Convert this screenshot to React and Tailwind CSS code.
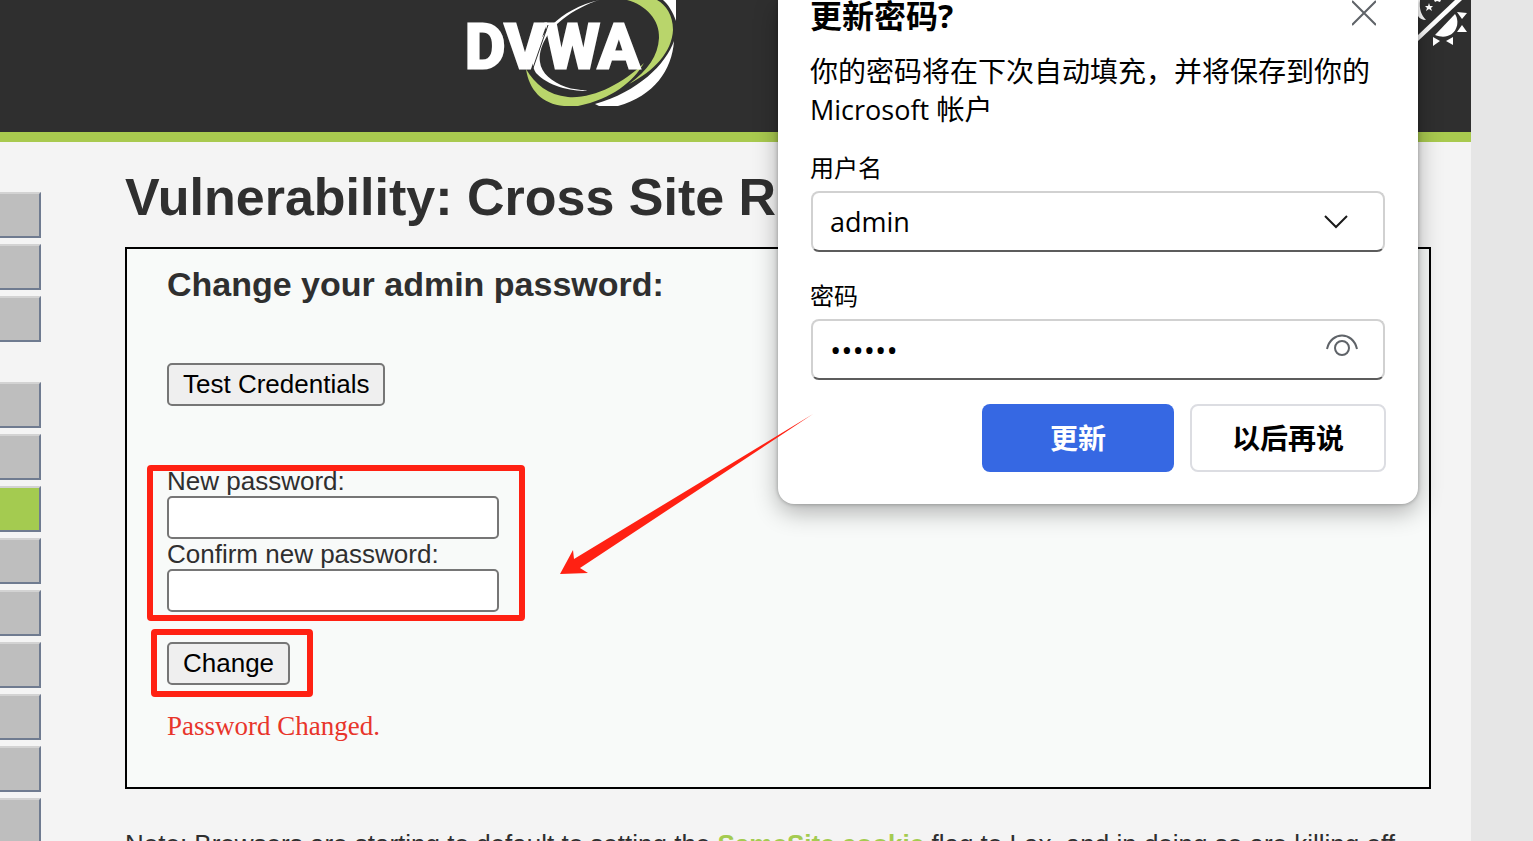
import React, { useState } from "react";

const menuGroups = [
  ["Home", "Instructions", "Setup / Reset DB"],
  [
    "Brute Force",
    "Command Injection",
    "CSRF",
    "File Inclusion",
    "File Upload",
    "Insecure CAPTCHA",
    "SQL Injection",
    "SQL Injection (Blind)",
    "Weak Session IDs",
  ],
];

function Logo() {
  return (
    <svg width="212" height="106" viewBox="0 0 212 106" role="img" aria-label="DVWA">
      {/* rings behind the letters */}
      <path d="M134 0 C114 4 97 14 86 25 C70 42 62 60 70 73 C82 86 104 91 121 91 C121 90 108 90 100 87 C86 82 75 73 74 62 C72 48 82 30 97 19 C107 11 122 3 134 0Z" fill="#fff" />
      <path d="M161 0 C180 5 194 20 193 38 C192 56 182 70 163 84 C188 71 206 52 207 30 C207 15 200 5 191 0Z" fill="#b9d56b" />
      <path d="M60 69 C63 90 76 104 98 106 L112 106 C146 99 167 82 178 63 C156 84 127 99 102 97 C82 95 69 84 60 69Z" fill="#b9d56b" />
      <path d="M197 0 C202 4 207 12 210 21 L210 0Z" fill="#fff" />
      <path d="M208 41 C200 64 172 92 129 104 L133 106 L152 106 C188 96 206 70 208 41Z" fill="#fff" />
      <text
        x="-1"
        y="68"
        fill="#fff"
        stroke="#fff"
        strokeWidth="3"
        className="font-['Roboto',sans-serif] text-[62px] font-bold"
      >
        DVWA
      </text>
      <path d="M67 68 L82 25" stroke="#2f2f2f" strokeWidth="1" />
    </svg>
  );
}

function ThemeIcon() {
  return (
    <svg width="64" height="46" viewBox="0 0 64 46" fill="#fff" aria-hidden="true">
      <path d="M11 0 H13 C12 9 14 15 19 20 C15 20 12 18 11 16Z" />
      <path d="M22 3 l1 3 3 0 -2 2 1 3 -3 -2 -3 2 1 -3 -2 -2 3 0Z" />
      <path d="M27 0 h7 l-1 2 -3 -1 -2 1Z" />
      <path d="M48 0 H55 L11 41 V35Z" />
      <path d="M48 14 C55 25 46 42 28 35Z" />
      <path d="M50 12 L60 13 L55 19Z M55 25 L60 32 L50 32Z M26 37 L33 41 L26 46Z M46 37 L46 45 L39 41Z" />
    </svg>
  );
}

function SideMenu() {
  return (
    <nav className="flex w-[41px] shrink-0 flex-col gap-10 pt-[50px]">
      {menuGroups.map((group, i) => (
        <ul key={i} className="flex flex-col gap-1.5">
          {group.map((name) => (
            <li key={name}>
              <a
                href="#"
                aria-label={name}
                className={`block h-[46px] border-y-2 border-r-2 border-t-[#d3d3d3] border-r-[#6f7b90] border-b-[#6f7b90] ${
                  name === "CSRF" ? "bg-[#a4cb50]" : "bg-[#bebebe]"
                }`}
              />
            </li>
          ))}
        </ul>
      ))}
    </nav>
  );
}

function PasswordForm() {
  const inputClass = "block h-[43px] w-[332px] rounded-[5px] border-2 border-[#767676] bg-white px-2";
  const buttonClass = "h-[43px] rounded-[5px] border-2 border-[#767676] bg-[#efefef] px-3.5 pb-0.5 leading-[30px] text-black";

  return (
    <form
      onSubmit={(e) => e.preventDefault()}
      className="mt-5 flex flex-col items-start border-2 border-black bg-[#f8faf9] px-10 pt-[15px] pb-[46px]"
    >
      <h3 className="text-[34px] leading-10 font-bold">Change your admin password:</h3>
      <button type="button" className={`mt-[59px] ${buttonClass}`}>
        Test Credentials
      </button>

      <div className="relative mt-[60px]">
        <label htmlFor="new" className="block">New password:</label>
        <input id="new" type="password" className={inputClass} />
        <label htmlFor="confirm" className="block">Confirm new password:</label>
        <input id="confirm" type="password" className={inputClass} />
        <div className="pointer-events-none absolute -top-px -right-[26px] -bottom-[9px] -left-5 rounded border-6 border-[#ff2113]" />
      </div>

      <div className="relative mt-[30px]">
        <button type="submit" className={`block ${buttonClass}`}>Change</button>
        <div className="pointer-events-none absolute -top-[13px] -right-[23px] -bottom-3 -left-4 rounded border-6 border-[#ff2113]" />
      </div>

      <p className="mt-[26px] font-['Liberation_Serif',serif] text-[27px] text-[#e8352b]">Password Changed.</p>
    </form>
  );
}

function SavePasswordDialog() {
  const [user, setUser] = useState("admin");
  const [password, setPassword] = useState("123456");
  const fieldClass = "h-[61px] w-full rounded-lg border-2 border-[#d1d1d1] border-b-[#5c5c5c] bg-white px-[17px]";

  return (
    <section
      aria-label="更新密码"
      className="absolute top-0 right-[115px] w-[640px] rounded-b-2xl bg-white px-8 pb-8 font-['Open_Sans','Noto_Sans_CJK_SC',sans-serif] text-[28px] leading-[38px] text-black shadow-[0_8px_24px_rgba(0,0,0,0.3),0_0_4px_rgba(0,0,0,0.3)]"
    >
      <div className="flex items-start justify-between">
        <h2 className="text-[32px] leading-8 font-bold">更新密码?</h2>
        <button type="button" aria-label="关闭" className="mr-2.5">
          <svg width="24" height="26" viewBox="0 0 24 26" stroke="#5f6368" strokeWidth="2" aria-hidden="true">
            <path d="M0 1 L24 25 M24 1 L0 25" />
          </svg>
        </button>
      </div>
      <p className="mt-5">
        你的密码将在下次自动填充，并将保存到你的
        <br />
        <span className="text-[27px]">Microsoft</span> 帐户
      </p>

      <label htmlFor="user" className="mt-6 block text-2xl leading-[30px]">用户名</label>
      <div className="relative mx-px mt-2 flex items-center">
        <select
          id="user"
          value={user}
          onChange={(e) => setUser(e.target.value)}
          className={`appearance-none text-[27px] ${fieldClass}`}
        >
          <option>admin</option>
        </select>
        <svg className="pointer-events-none absolute right-[37px]" width="24" height="14" viewBox="0 0 24 14" fill="none" stroke="#1a1a1a" strokeWidth="2" aria-hidden="true">
          <path d="M1 1 L12 12 L23 1" />
        </svg>
      </div>

      <label htmlFor="saved" className="mt-[29px] block text-2xl leading-[30px]">密码</label>
      <div className="relative mx-px mt-2">
        <input
          id="saved"
          type="password"
          value={password}
          onChange={(e) => setPassword(e.target.value)}
          className={`block text-[30px] ${fieldClass}`}
        />
        <button type="button" aria-label="显示密码" className="absolute top-[15px] right-[27px]">
          <svg width="32" height="22" viewBox="0 0 32 22" fill="none" stroke="#5f6368" strokeWidth="2" aria-hidden="true">
            <path d="M1 15 C5 -3 27 -3 31 15" />
            <circle cx="16" cy="14" r="7" />
          </svg>
        </button>
      </div>

      <div className="mt-6 flex justify-end gap-4 font-bold">
        <button type="button" className="h-[68px] w-48 rounded-lg bg-[#3668e3] text-white">更新</button>
        <button type="button" className="h-[68px] w-[196px] rounded-lg border-2 border-[#dcdde2] bg-white">以后再说</button>
      </div>
    </section>
  );
}

export default function App() {
  return (
    <div className="relative h-screen overflow-hidden bg-[#e6e6e6] pr-[62px] font-['Liberation_Sans',Arial,sans-serif] text-[26px] leading-[30px] text-[#2f2f2f]">
      <div className="min-h-full bg-[#f4f4f4]">
        <header className="flex h-[142px] items-start justify-between border-b-10 border-[#a9ca4f] bg-[#2f2f2f] pl-[466px]">
          <Logo />
          <ThemeIcon />
        </header>
        <div className="flex">
          <SideMenu />
          <main className="min-w-0 flex-1 pt-[25px] pr-10 pl-[84px]">
            <h1 className="text-[52px] leading-[60px] font-bold whitespace-nowrap">
              Vulnerability: Cross Site Request
            </h1>
            <PasswordForm />
            <p className="mt-10">
              Note: Browsers are starting to default to setting the{" "}
              <a href="#" className="font-bold text-[#a4cb50]">SameSite cookie</a> flag to Lax, and in doing so are killing off
            </p>
          </main>
        </div>
      </div>

      <SavePasswordDialog />

      {/* arrow from the dialog to the form fields */}
      <svg className="pointer-events-none absolute top-[414px] left-[560px]" width="254" height="162" viewBox="0 0 254 162" fill="#ff2113" aria-hidden="true">
        <path d="M253 0 L14 145 L13 136 L0 160 L28 159 L20 154Z" />
      </svg>
    </div>
  );
}
